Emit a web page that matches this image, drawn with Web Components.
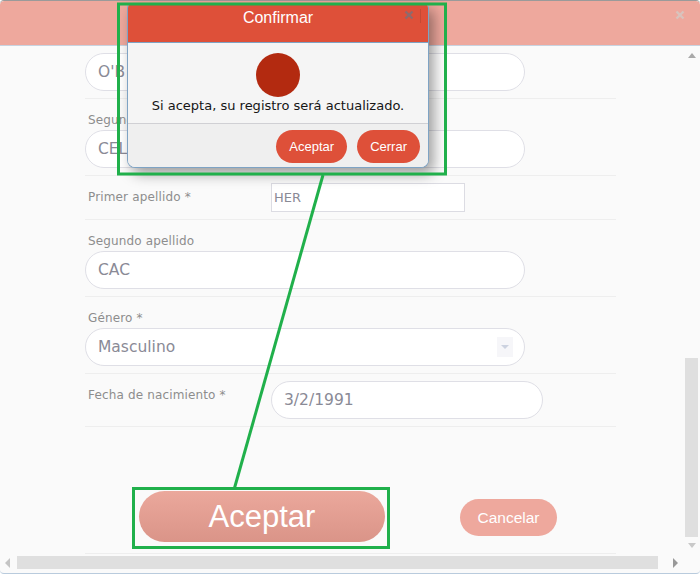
<!DOCTYPE html>
<html lang="es">
<head>
<meta charset="utf-8">
<title>Confirmar</title>
<style>
  html, body { margin: 0; padding: 0; background: #fff; }
  body { font-family: "DejaVu Sans", sans-serif; overflow: hidden; }
</style>
</head>
<body>
<app-window>
  <form-row>
    <pill-input value="O'B"></pill-input>
  </form-row>
  <form-row label="Segundo nombre" top="13">
    <pill-input value="CEL"></pill-input>
  </form-row>
  <form-row label="Primer apellido *" inline top="7" bottom="7">
    <plain-input value="HER"></plain-input>
  </form-row>
  <form-row label="Segundo apellido" top="13">
    <pill-input value="CAC"></pill-input>
  </form-row>
  <form-row label="Género *" top="13">
    <pill-input value="Masculino" select></pill-input>
  </form-row>
  <form-row label="Fecha de nacimiento *" inline top="7" bottom="7">
    <pill-input value="3/2/1991" short></pill-input>
  </form-row>
  <div slot="actions">
    <round-button big>Aceptar</round-button>
    <round-button muted>Cancelar</round-button>
  </div>
</app-window>

<confirm-dialog heading="Confirmar">
  Si acepta, su registro será actualizado.
  <round-button slot="footer" small>Aceptar</round-button>
  <round-button slot="footer" small>Cerrar</round-button>
</confirm-dialog>

<callout-marks></callout-marks>

<script>
const closeIcon = (color) => `
  <svg width="10" height="10" viewBox="0 0 10 10" aria-hidden="true">
    <path d="M1.5 1.5l7 7M8.5 1.5l-7 7" fill="none" stroke="${color}" stroke-width="2.4"/>
  </svg>`;

class AppWindow extends HTMLElement {
  constructor() {
    super();
    this.attachShadow({ mode: 'open' }).innerHTML = `
      <style>
        :host {
          display: flex;
          flex-direction: column;
          width: 700px;
          height: 574px;
          box-sizing: border-box;
          border-top: 1px solid #9a9a9a;
          border-bottom: 1px solid #b9cbdd;
          border-radius: 4px;
          background: #fafafa;
          overflow: hidden;
        }
        header {
          flex: none;
          height: 45px;
          display: flex;
          justify-content: flex-end;
          padding: 9px 15px 0 0;
          box-sizing: border-box;
          background: #eea89d;
          border-bottom: 1px solid #c8d3e0;
          border-radius: 4px 4px 0 0;
        }
        .middle { flex: 1; display: flex; min-height: 0; }
        main { flex: 1; padding: 7px 0 0 85px; }
        .rows { width: 531px; }
        .actions { width: 531px; }
        ::slotted([slot="actions"]) {
          display: flex;
          align-items: center;
          gap: 75px;
          box-sizing: border-box;
          padding: 64px 0 11px 54px;
          border-bottom: 1px solid #eee;
        }
        .vbar {
          flex: none;
          width: 15px;
          margin-right: 1px;
          display: flex;
          flex-direction: column;
          align-items: center;
        }
        .vtrack { width: 13px; flex: 1; padding-top: 300px; box-sizing: border-box; }
        .vthumb { height: 179px; background: #dfdfdf; }
        .hbar {
          flex: none;
          height: 18px;
          display: flex;
          align-items: center;
          padding-bottom: 3px;
          box-sizing: border-box;
        }
        .hthumb { width: 641px; height: 13px; background: #dfdfdf; margin-left: 7px; }
        .up { border: solid transparent; border-width: 0 4px 5px; border-bottom-color: #a9a9a9; margin-top: 7px; }
        .down { border: solid transparent; border-width: 5px 4px 0; border-top-color: #c9c9c9; margin: 6px 0 7px; }
        .left { border: solid transparent; border-width: 5px 5px 5px 0; border-right-color: #c4c4c4; margin-left: 5px; }
        .right { border: solid transparent; border-width: 5px 0 5px 5px; border-left-color: #999; margin-left: 15px; }
      </style>
      <header>${closeIcon('#d9c3bd')}</header>
      <div class="middle">
        <main>
          <div class="rows"><slot></slot></div>
          <div class="actions"><slot name="actions"></slot></div>
        </main>
        <div class="vbar">
          <span class="up"></span>
          <div class="vtrack"><div class="vthumb"></div></div>
          <span class="down"></span>
        </div>
      </div>
      <div class="hbar">
        <span class="left"></span>
        <div class="hthumb"></div>
        <span class="right"></span>
      </div>`;
  }
}

class FormRow extends HTMLElement {
  connectedCallback() {
    const inline = this.hasAttribute('inline');
    const top = this.getAttribute('top') || 0;
    const bottom = this.getAttribute('bottom') || 7;
    const label = this.getAttribute('label');
    this.attachShadow({ mode: 'open' }).innerHTML = `
      <style>
        :host {
          display: flex;
          flex-direction: ${inline ? 'row' : 'column'};
          padding: ${top}px 0 ${bottom}px;
          border-bottom: 1px solid #eee;
        }
        label {
          display: block;
          font: 12px/16px "DejaVu Sans", sans-serif;
          letter-spacing: .15px;
          color: #8d8d8d;
          padding: ${inline ? '6px 0 0 3px' : '0 0 2px 3px'};
          ${inline ? 'width: 183px; flex: none;' : ''}
        }
      </style>
      ${label ? `<label>${label}</label>` : ''}
      <slot></slot>`;
  }
}

class PillInput extends HTMLElement {
  connectedCallback() {
    const isSelect = this.hasAttribute('select');
    const isShort = this.hasAttribute('short');
    this.attachShadow({ mode: 'open' }).innerHTML = `
      <style>
        :host {
          display: flex;
          align-items: center;
          width: ${isShort ? 272 : 440}px;
          height: 38px;
          box-sizing: border-box;
          padding: 0 11px 0 12px;
          background: #fff;
          border: 1px solid #dfdfe6;
          border-radius: 19px;
          font: 15.500px "DejaVu Sans", sans-serif;
          color: #8a8a96;
        }
        span { flex: 1; }
        .arrow {
          flex: none;
          display: flex;
          align-items: center;
          justify-content: center;
          width: 16px;
          height: 20px;
          background: #f6f6f9;
        }
        .arrow i { border: solid transparent; border-width: 4px 4px 0; border-top-color: #ccd2e0; }
      </style>
      <span>${this.getAttribute('value')}</span>
      ${isSelect ? '<div class="arrow"><i></i></div>' : ''}`;
  }
}

class PlainInput extends HTMLElement {
  connectedCallback() {
    this.attachShadow({ mode: 'open' }).innerHTML = `
      <style>
        :host {
          display: flex;
          align-items: center;
          width: 194px;
          height: 29px;
          box-sizing: border-box;
          padding: 0 2px;
          background: #fff;
          border: 1px solid #dcdce3;
          font: 13px "DejaVu Sans", sans-serif;
          color: #8a8a96;
        }
      </style>
      ${this.getAttribute('value')}`;
  }
}

class RoundButton extends HTMLElement {
  constructor() {
    super();
    this.attachShadow({ mode: 'open' }).innerHTML = `
      <style>
        :host {
          display: inline-flex;
          align-items: center;
          justify-content: center;
          box-sizing: border-box;
          font-family: "Liberation Sans", Arial, sans-serif;
          color: #fff;
          background: #de5039;
          height: 33px;
          padding: 0 13px;
          border-radius: 17px;
          font-size: 13px;
        }
        :host([big]) {
          width: 246px;
          height: 51px;
          border-radius: 26px;
          font-size: 31px;
          background: linear-gradient(#eba89c, #da9488);
        }
        :host([muted]) {
          width: 97px;
          height: 37px;
          margin-top: 2px;
          border-radius: 19px;
          font-size: 15.500px;
          background: #eea89d;
        }
      </style>
      <slot></slot>`;
  }
}

class ConfirmDialog extends HTMLElement {
  connectedCallback() {
    this.attachShadow({ mode: 'open' }).innerHTML = `
      <style>
        :host {
          position: absolute;
          left: 127px;
          top: 4px;
          width: 302px;
          height: 164px;
          box-sizing: border-box;
          display: flex;
          flex-direction: column;
          border: 1px solid #7ea3c4;
          border-top: 0;
          border-radius: 4px 4px 8px 8px;
          background: #f5f5f5;
          box-shadow: 5px 6px 14px rgba(0, 0, 0, .38);
          overflow: hidden;
        }
        header {
          flex: none;
          height: 38px;
          position: relative;
          text-align: center;
          background: #de5039;
          border-bottom: 1px solid #7ea3c4;
          color: #fff;
          font: 16px/28px "Liberation Sans", Arial, sans-serif;
        }
        header svg { position: absolute; right: 14px; top: 6px; }
        header::after {
          content: "";
          position: absolute;
          right: 7px;
          top: 5px;
          height: 14px;
          border-right: 1px solid rgba(120, 50, 40, .25);
        }
        .content {
          flex: none;
          height: 81px;
          display: flex;
          flex-direction: column;
          align-items: center;
          padding-top: 10px;
          box-sizing: border-box;
          font: 13px/18px "DejaVu Sans", sans-serif;
          color: #161616;
          border-bottom: 1px solid #d0d0d4;
        }
        .dot { width: 44px; height: 44px; border-radius: 50%; background: #b32a10; flex: none; }
        footer {
          flex: 1;
          display: flex;
          justify-content: flex-end;
          gap: 10px;
          padding: 6px 8px 0 0;
          background: #efefef;
        }
      </style>
      <header>${this.getAttribute('heading')}${closeIcon('#8f6a6c')}</header>
      <div class="content"><div class="dot"></div><div><slot></slot></div></div>
      <footer><slot name="footer"></slot></footer>`;
  }
}

class CalloutMarks extends HTMLElement {
  constructor() {
    super();
    this.attachShadow({ mode: 'open' }).innerHTML = `
      <style>
        :host { position: absolute; left: 0; top: 0; width: 700px; height: 574px; pointer-events: none; }
      </style>
      <svg width="700" height="574" viewBox="0 0 700 574" fill="none" stroke="#20b04b" stroke-width="3" aria-hidden="true">
        <rect x="118.500" y="4" width="327" height="170"/>
        <rect x="133.500" y="488.500" width="255" height="59"/>
        <path d="M323 175L234.500 488"/>
      </svg>`;
  }
}

customElements.define('app-window', AppWindow);
customElements.define('form-row', FormRow);
customElements.define('pill-input', PillInput);
customElements.define('plain-input', PlainInput);
customElements.define('round-button', RoundButton);
customElements.define('confirm-dialog', ConfirmDialog);
customElements.define('callout-marks', CalloutMarks);
</script>
</body>
</html>
